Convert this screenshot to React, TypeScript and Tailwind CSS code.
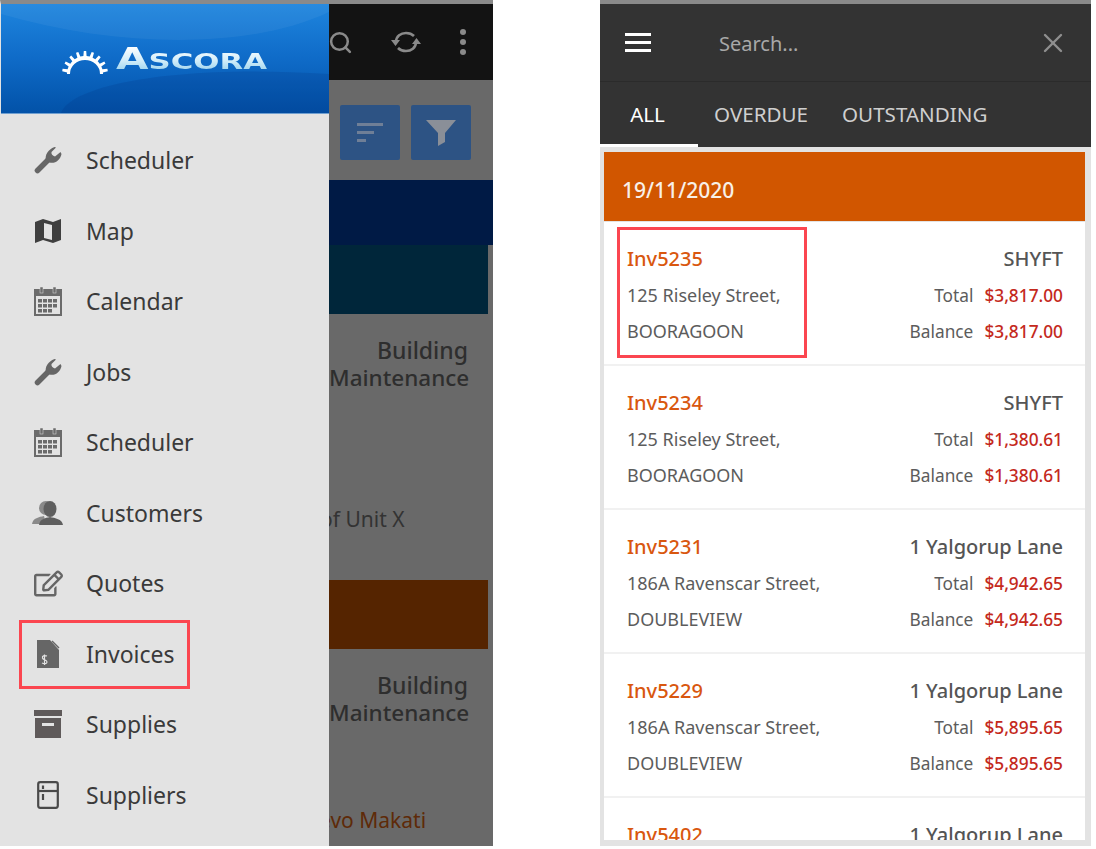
import React from "react";
import { FaRegEdit } from "react-icons/fa";
import { Search, X } from "lucide-react";

const sans = "font-['Noto_Sans',sans-serif]";

// half gear for the logo: ring with teeth, open at the bottom
const gearPath = (() => {
  const cx = 23;
  const cy = 24;
  const pts: string[] = [];
  const teeth = 9;
  for (let i = 0; i < teeth; i++) {
    const a0 = Math.PI - (i / teeth) * Math.PI;
    const step = Math.PI / teeth;
    [
      [a0, 18],
      [a0 - step * 0.25, 18],
      [a0 - step * 0.35, 23],
      [a0 - step * 0.65, 23],
      [a0 - step * 0.75, 18],
      [a0 - step, 18],
    ].forEach(([a, r]) => pts.push(`${(cx + r * Math.cos(a)).toFixed(1)} ${(cy - r * Math.sin(a)).toFixed(1)}`));
  }
  const inner = `A15 14 0 0 0 ${cx - 15} ${cy}`;
  return `M${pts.join(" L")} L${cx + 15} ${cy} ${inner} Z`;
})();

const WrenchIcon = () => (
  <svg viewBox="0 0 28 28" className="h-[28px] w-[28px]">
    <path d="M3.5 24.5 L15 13" stroke="#666" strokeWidth="5.5" strokeLinecap="round" />
    <path
      d="M12 15 C10.5 9 14 3.5 20.5 1 L22 1.5 L17.5 6 C17 8 18.5 10 21 10.5 L26.5 6 L27.5 8 C26.5 14 21 18 15.5 16.5 Z"
      fill="#666"
    />
  </svg>
);

const CalendarIcon = () => (
  <svg viewBox="0 0 28 30" className="h-[30px] w-[28px]">
    <rect x="1" y="4" width="26" height="25" fill="none" stroke="#6b6b6b" strokeWidth="2" />
    <rect x="1" y="4" width="26" height="6" fill="#6b6b6b" />
    <rect x="6" y="1" width="3" height="6" fill="#6b6b6b" stroke="#e3e3e3" strokeWidth="0.5" />
    <rect x="19" y="1" width="3" height="6" fill="#6b6b6b" stroke="#e3e3e3" strokeWidth="0.5" />
    {[13, 18, 23].map((y) =>
      [4, 9, 14, 19].map((x) =>
        y === 23 && x === 19 ? null : <rect key={`${x}-${y}`} x={x} y={y} width="4" height="3.5" fill="#6b6b6b" />
      )
    )}
  </svg>
);

const MapIcon = () => (
  <svg viewBox="0 0 26 26" className="h-[26px] w-[26px]">
    <path
      fillRule="evenodd"
      fill="#3f3f3f"
      d="M0 4 L8 1 L18 4 L26 1 V22 L18 25 L8 22 L0 25 Z M9 5 V20 L17 22 V7 Z"
    />
  </svg>
);

const CustomersIcon = () => (
  <svg viewBox="0 0 32 26" className="h-[26px] w-[32px]">
    <circle cx="14" cy="8" r="7" fill="#8a8a8a" />
    <path d="M0 24 C1 18 7 17 12 16 L14 24 Z" fill="#8a8a8a" />
    <ellipse cx="18" cy="9" rx="6.5" ry="8" fill="#5f5f5f" />
    <path d="M7 25 C8 19 13 18 18 17 C23 18 30 19 31 25 Z" fill="#5f5f5f" />
  </svg>
);

const InvoiceIcon = () => (
  <svg viewBox="0 0 24 30" className="h-[30px] w-[24px]">
    <path d="M1 1 H14 L23 11 V29 H1 Z" fill="#666" />
    <path d="M16 2 L23 9" stroke="#666" strokeWidth="1.4" />
    <path d="M11 17 C8 16 6 17 6.5 19 C7 21 11 20.5 11 23 C11 25 8 25 6 24 M8.5 15.5 V26" fill="none" stroke="#e3e3e3" strokeWidth="1.2" />
  </svg>
);

const SuppliesIcon = () => (
  <svg viewBox="0 0 28 28" className="h-[28px] w-[28px]">
    <rect x="0" y="0" width="28" height="6" fill="#5f5a5a" />
    <path fillRule="evenodd" d="M1 8 H27 V28 H1 Z M8 13 V16 H20 V13 Z" fill="#5f5a5a" />
  </svg>
);

const SuppliersIcon = () => (
  <svg viewBox="0 0 22 28" className="h-[28px] w-[22px]">
    <rect x="1.2" y="1.2" width="19.6" height="25.6" rx="2" fill="none" stroke="#4a4a4a" strokeWidth="2.2" />
    <path d="M1 10 H21" stroke="#4a4a4a" strokeWidth="2.2" />
    <path d="M6 4.5 V8 M6 13 V19" stroke="#4a4a4a" strokeWidth="2.2" />
  </svg>
);

const menu: { label: string; icon: React.ReactNode }[] = [
  { label: "Scheduler", icon: <WrenchIcon /> },
  { label: "Map", icon: <MapIcon /> },
  { label: "Calendar", icon: <CalendarIcon /> },
  { label: "Jobs", icon: <WrenchIcon /> },
  { label: "Scheduler", icon: <CalendarIcon /> },
  { label: "Customers", icon: <CustomersIcon /> },
  { label: "Quotes", icon: <FaRegEdit className="h-[29px] w-[29px] text-[#666]" /> },
  { label: "Invoices", icon: <InvoiceIcon /> },
  { label: "Supplies", icon: <SuppliesIcon /> },
  { label: "Suppliers", icon: <SuppliersIcon /> },
];

const invoices = [
  { id: "Inv5235", name: "SHYFT", street: "125 Riseley Street,", suburb: "BOORAGOON", amount: "$3,817.00" },
  { id: "Inv5234", name: "SHYFT", street: "125 Riseley Street,", suburb: "BOORAGOON", amount: "$1,380.61" },
  { id: "Inv5231", name: "1 Yalgorup Lane", street: "186A Ravenscar Street,", suburb: "DOUBLEVIEW", amount: "$4,942.65" },
  { id: "Inv5229", name: "1 Yalgorup Lane", street: "186A Ravenscar Street,", suburb: "DOUBLEVIEW", amount: "$5,895.65" },
  { id: "Inv5402", name: "1 Yalgorup Lane", street: "", suburb: "", amount: "" },
];

const Logo = () => (
  <div className="flex w-[205px] items-end gap-[8px]">
    <svg viewBox="0 0 46 24" className="h-[24px] w-[46px] shrink-0">
      <path d={gearPath} fill="#fff" />
    </svg>
    <span className="origin-left scale-x-[1.4] bg-gradient-to-b from-white via-[#d4eefa] to-[#8fcdea] bg-clip-text font-['DejaVu_Sans',sans-serif] text-[30px] leading-[25px] font-bold whitespace-nowrap text-transparent">
      A<span className="text-[22px]">SCORA</span>
    </span>
  </div>
);

const Backdrop = () => (
  <div className={`flex w-[164px] flex-col overflow-hidden bg-[#696969] ${sans}`}>
    <div className="flex h-[76px] items-center bg-[#131313]">
      <Search className="ml-[-1px] h-[25px] w-[25px] text-[#8a8a8a]" strokeWidth={2.4} />
      <svg viewBox="0 0 30 24" className="ml-[38px] h-[24px] w-[30px]" fill="none" stroke="#8a8a8a" strokeWidth="2.6">
        <path d="M5 12 C5 6 10 3 15 3 C18 3 21 4 23 6" />
        <path d="M25 12 C25 18 20 21 15 21 C12 21 9 20 7 18" />
        <path d="M0 10 H9 L4.5 16 Z M21 14 H30 L25.5 8 Z" fill="#8a8a8a" stroke="none" />
      </svg>
      <div className="ml-[39px] flex flex-col gap-[4px]">
        <span className="h-[6px] w-[6px] rounded-full bg-[#8a8a8a]" />
        <span className="h-[6px] w-[6px] rounded-full bg-[#8a8a8a]" />
        <span className="h-[6px] w-[6px] rounded-full bg-[#8a8a8a]" />
      </div>
    </div>
    <div className="flex h-[100px] gap-[11px] pt-[25px] pl-[11px]">
      <div className="flex h-[55px] w-[60px] flex-col justify-center gap-[5px] rounded-[2px] bg-[#2d5384] pl-[17px]">
        <span className="h-[3px] w-[26px] bg-[#6f7f97]" />
        <span className="h-[3px] w-[17px] bg-[#6f7f97]" />
        <span className="h-[3px] w-[9px] bg-[#6f7f97]" />
      </div>
      <div className="flex h-[55px] w-[60px] items-center justify-center rounded-[2px] bg-[#2d5384]">
        <svg viewBox="0 0 30 27" className="h-[27px] w-[30px]">
          <path d="M0 1 H30 L19 14 V23 L12 27 V14 Z" fill="#8a8f98" />
        </svg>
      </div>
    </div>
    <div className="h-[65px] bg-[#001a45]" />
    <div className="h-[69px] w-[159px] bg-[#00263a]" />
    <div className="h-[266px] w-[139px] pt-[22px] text-right text-[23px] leading-[28px] font-medium whitespace-nowrap text-[#2e2e2e]">
      <div>Building</div>
      <div className="text-[22.5px]">Maintenance</div>
      <div className="mt-[113px] ml-[-9px] text-left text-[21px] leading-[28px] font-normal text-[#333]">of Unit X</div>
    </div>
    <div className="h-[69px] w-[159px] bg-[#552400]" />
    <div className="w-[139px] pt-[22px] text-right text-[23px] leading-[28px] font-medium whitespace-nowrap text-[#2e2e2e]">
      <div>Building</div>
      <div className="text-[22.5px]">Maintenance</div>
      <div className="mt-[79px] ml-[-10px] text-left text-[21px] leading-[28px] font-normal text-[#5e2a08]">evo Makati</div>
    </div>
  </div>
);

const Drawer = () => (
  <div className="flex w-[328px] flex-col bg-[#e3e3e3]">
    <div className="relative flex h-[109px] items-center justify-center overflow-hidden bg-gradient-to-b from-[#1e85de] via-[#0f6bc8] to-[#0352a8] shadow-[0_1px_0_#6f9fd0]">
      <svg viewBox="0 0 328 109" className="absolute inset-0 h-full w-full" preserveAspectRatio="none">
        <path d="M0 0 H328 V8 C250 45 120 45 0 10 Z" fill="#ffffff" opacity="0.05" />
        <path d="M60 109 C70 80 180 60 328 70 V109 Z" fill="#002f7a" opacity="0.18" />
      </svg>
      <div className="relative mt-[2px] ml-[-2px]">
        <Logo />
      </div>
    </div>
    <div className={`pt-[12px] text-[23px] leading-[32px] text-[#3a3a3a] ${sans}`}>
      {menu.map((item, i) => (
        <div key={i} className="relative flex h-[70.5px] items-center">
          <span className="ml-[17px] flex w-[60px] justify-center">{item.icon}</span>
          <span className="ml-[8px]">{item.label}</span>
          {item.label === "Invoices" && (
            <span className="absolute top-[1px] left-[18px] h-[69px] w-[171px] border-[3px] border-[#fb4650]" />
          )}
        </div>
      ))}
    </div>
  </div>
);

const InvoiceRow = ({ inv, boxed }: { inv: (typeof invoices)[number]; boxed: boolean }) => (
  <div className="relative flex h-[144px] justify-between border-b-2 border-[#f1f1f1] bg-white pt-[19px] pr-[22px] pl-[23px] leading-[35.5px] text-[#5c5c5c]">
    <div className="text-[18px]">
      <div className="mb-[2px] text-[20px] leading-[35px] font-medium text-[#d9570f]">{inv.id}</div>
      <div>{inv.street}</div>
      <div>{inv.suburb}</div>
    </div>
    <div className="text-right text-[17.3px]">
      <div className="mb-[2px] text-[20px] leading-[35px] font-medium text-[#555]">{inv.name}</div>
      <div className="flex justify-end gap-[11px]">
        <span>Total</span>
        <span className="font-medium text-[#c4291c]">{inv.amount}</span>
      </div>
      <div className="flex justify-end gap-[11px]">
        <span>Balance</span>
        <span className="font-medium text-[#c4291c]">{inv.amount}</span>
      </div>
    </div>
    {boxed && <span className="absolute top-[5px] left-[13px] h-[131px] w-[190px] border-[3px] border-[#fb4650]" />}
  </div>
);

const InvoiceList = () => (
  <div className={`flex h-[846px] w-[491px] flex-col overflow-hidden border-t-[4px] border-[#8a8a8a] bg-[#e3e3e3] ${sans}`}>
    <div className="flex h-[78px] shrink-0 items-center border-b border-[#2b2b2b] bg-[#333] pl-[25px] text-[#a8a8a8]">
      <div className="flex w-[26px] flex-col gap-[5px]">
        <span className="h-[3px] bg-white" />
        <span className="h-[3px] bg-white" />
        <span className="h-[3px] bg-white" />
      </div>
      <span className="ml-[68px] flex-1 pt-[2px] text-[20px]">Search...</span>
      <X className="mr-[22px] h-[32px] w-[32px] text-[#8f8f8f]" strokeWidth={1.8} />
    </div>
    <div className="flex h-[65px] shrink-0 items-center bg-[#333] text-[20.6px] text-[#cfcfcf]">
      <div className="flex h-full w-[98px] items-center justify-center border-b-[3px] border-white pt-[3px] pr-[3px] text-white">ALL</div>
      <span className="ml-[16px]">OVERDUE</span>
      <span className="ml-[34px]">OUTSTANDING</span>
    </div>
    <div className="mx-[4px] mt-[5px] flex h-[69px] w-[481px] shrink-0 items-center bg-[#d15600] pt-[8px] pl-[18px] text-[21px] font-medium text-[#f8f0e8]">
      19/11/2020
    </div>
    <div className="mx-[4px] w-[481px] flex-1 overflow-hidden pt-[1px]">
      {invoices.map((inv, i) => (
        <InvoiceRow key={inv.id} inv={inv} boxed={i === 0} />
      ))}
    </div>
    <div className="h-[6px] shrink-0 bg-[#e3e3e3]" />
  </div>
);

export default function App() {
  return (
    <div className="flex h-[849px] w-[1096px] items-start overflow-hidden bg-white">
      <div className="flex h-[846px] w-[493px] overflow-hidden border-t-[4px] border-l border-[#8a8a8a] border-l-[#e3e3e3]">
        <Drawer />
        <Backdrop />
      </div>
      <div className="ml-[107px]">
        <InvoiceList />
      </div>
    </div>
  );
}
